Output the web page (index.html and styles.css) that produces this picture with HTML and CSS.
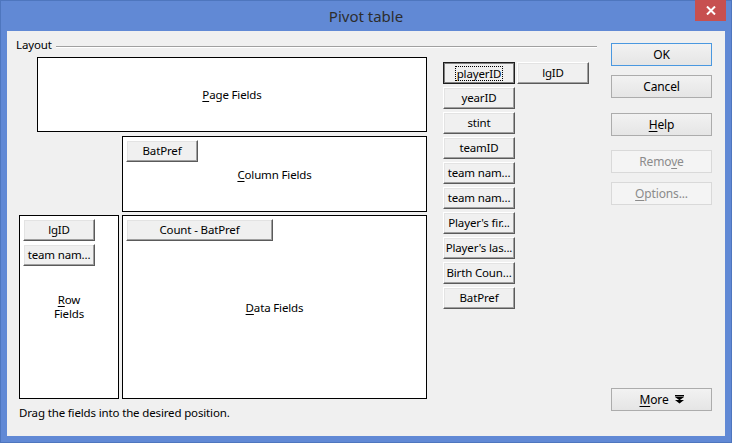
FILE: index.html
```html
<!DOCTYPE html>
<html lang="en">
<head>
<meta charset="utf-8">
<title>Pivot table</title>
<link rel="stylesheet" href="styles.css">
</head>
<body>
<div class="window">
  <div class="titlebar">
    <span class="title">Pivot table</span>
    <div class="close">
      <svg width="10" height="9" viewBox="0 0 10 9"><path d="M1 0.5L9 8.5M9 0.5L1 8.5" stroke="#fff" stroke-width="2"/></svg>
    </div>
  </div>
  <div class="client">
    <div class="main">
      <div class="legend"><span class="legend-label">Layout</span><div class="rule"></div></div>
      <div class="body">
        <div class="boxes">
          <div class="box page"><span class="cap"><u>P</u>age Fields</span></div>
          <div class="box column">
            <div class="fbtn">BatPref</div>
            <span class="cap"><u>C</u>olumn Fields</span>
          </div>
          <div class="lower">
            <div class="box rowbox">
              <div class="stack">
                <div class="fbtn">lgID</div>
                <div class="fbtn">team nam...</div>
              </div>
              <div class="cap twoline"><span class="ln"><u>R</u>ow</span><span class="ln">Fields</span></div>
            </div>
            <div class="box data">
              <div class="fbtn wide">Count - BatPref</div>
              <span class="cap"><u>D</u>ata Fields</span>
            </div>
          </div>
        </div>
        <div class="fields">
          <div class="fbtn selected"><span class="focus">playerID</span></div>
          <div class="fbtn">lgID</div>
          <div class="fbtn">yearID</div>
          <div class="fbtn c1">stint</div>
          <div class="fbtn c1">teamID</div>
          <div class="fbtn c1">team nam...</div>
          <div class="fbtn c1">team nam...</div>
          <div class="fbtn c1">Player's fir...</div>
          <div class="fbtn c1">Player's las...</div>
          <div class="fbtn c1">Birth Coun...</div>
          <div class="fbtn c1">BatPref</div>
        </div>
      </div>
      <p class="hint">Drag the fields into the desired position.</p>
    </div>
    <div class="actions">
      <div class="btn default">OK</div>
      <div class="btn cancel">Cancel</div>
      <div class="btn help"><span><u>H</u>elp</span></div>
      <div class="btn disabled remove"><span>Remo<u>v</u>e</span></div>
      <div class="btn disabled options"><span><u>O</u>ptions...</span></div>
      <div class="btn more"><span><u>M</u>ore</span>
        <svg width="9" height="9" viewBox="0 0 9 9"><path d="M0 0H9V1.4H0Z M0 2L4.5 5.2L9 2Z M0 5L4.5 8.6L9 5Z" fill="#000"/></svg>
      </div>
    </div>
  </div>
</div>
</body>
</html>
```

FILE: styles.css
```css
* { box-sizing: border-box; }
html, body { margin: 0; padding: 0; }
body {
  width: 732px;
  height: 443px;
  overflow: hidden;
  font-family: "Noto Sans", "Open Sans", sans-serif;
  font-size: 11.5px;
  letter-spacing: -0.15px;
  color: #000;
}
u { text-decoration: underline; text-underline-offset: 2px; text-decoration-thickness: 1px; }

.window {
  width: 732px;
  height: 443px;
  background: #6189d5;
  box-shadow: inset 0 0 0 1px #4e76be;
  display: flex;
  flex-direction: column;
}

.titlebar {
  height: 31px;
  display: grid;
  grid-template-columns: 1fr auto 1fr;
  flex: none;
}
.title {
  grid-column: 2;
  align-self: center;
  font-size: 15px;
  letter-spacing: 0;
  line-height: 20px;
  color: #2d2d2d;
  padding-top: 1px;
}
.close {
  grid-column: 3;
  justify-self: end;
  align-self: start;
  width: 31px;
  height: 21px;
  margin-right: 6px;
  background: #c75050;
  display: flex;
  align-items: center;
  justify-content: center;
}

.client {
  flex: 1;
  margin: 0 7px 7px 7px;
  background: #f0f0f0;
  display: flex;
}

.main {
  width: 590px;
  flex: none;
  padding: 6px 0 0 9px;
  display: flex;
  flex-direction: column;
}
.legend {
  height: 16px;
  display: flex;
  align-items: flex-start;
}
.legend-label { line-height: 16px; }
.rule {
  flex: 1;
  margin: 9px 0 0 4px;
  border-top: 1px solid #a0a0a0;
  border-bottom: 1px solid #fff;
}

.body {
  display: flex;
  margin: 4px 0 0 3px;
}
.boxes {
  width: 408px;
  display: flex;
  flex-direction: column;
}
.box {
  background: #fff;
  border: 1px solid #000;
  display: grid;
  padding: 3px;
}
.box > * { grid-area: 1 / 1; }
.cap {
  place-self: center;
  text-align: center;
  line-height: 15px;
}
.twoline { display: flex; flex-direction: column; align-items: center; gap: 0; }
.twoline .ln { line-height: 14px; }
.page { width: 390px; height: 75px; margin-left: 18px; }
.column { width: 305px; height: 76px; margin: 4px 0 0 103px; }
.lower { display: flex; gap: 3px; margin-top: 3px; }
.rowbox { width: 100px; height: 184px; }
.data { width: 305px; height: 184px; }
.stack { display: flex; flex-direction: column; gap: 3px; align-self: start; justify-self: start; }
.box > .fbtn { align-self: start; justify-self: start; }

.fbtn {
  width: 72px;
  height: 22px;
  background: #f0f0f0;
  border: 1px solid;
  border-color: #fff #5a5a5a #5a5a5a #fff;
  box-shadow: inset -1px -1px 0 #a0a0a0, inset 1px 1px 0 #e3e3e3;
  display: flex;
  align-items: center;
  justify-content: center;
  white-space: nowrap;
  overflow: hidden;
  line-height: 14px;
}
.fbtn.wide { width: 147px; }
.fbtn.selected {
  border-color: #1e1e1e;
  box-shadow: inset -1px -1px 0 #808080, inset 1px 1px 0 #808080;
}
.focus {
  outline: 1px dotted #000;
  padding: 0 1px;
  line-height: 13px;
}

.fields {
  margin: 5px 0 0 16px;
  display: grid;
  grid-template-columns: 72px 72px;
  grid-auto-rows: 22px;
  column-gap: 2px;
  row-gap: 3px;
  align-content: start;
}
.fields .c1 { grid-column: 1; }

.hint {
  margin: 6px 0 0 3px;
  line-height: 16px;
}

.actions {
  width: 101px;
  margin-left: 14px;
  padding: 12px 0 25px;
  display: flex;
  flex-direction: column;
}
.btn {
  height: 23px;
  border: 1px solid #acacac;
  background: linear-gradient(#f2f2f2, #e5e5e5);
  display: flex;
  align-items: center;
  justify-content: center;
  line-height: 15px;
  font-size: 12px;
}
.btn.default { border-color: #4a98e0; }
.btn.cancel { margin-top: 9px; }
.btn.help { margin-top: 15px; }
.btn.remove { margin-top: 14px; }
.btn.options { margin-top: 9px; }
.btn.disabled {
  background: #f4f4f4;
  border-color: #d9d9d9;
  color: #8b8b8b;
}
.btn.more { margin-top: auto; gap: 6px; }
```
